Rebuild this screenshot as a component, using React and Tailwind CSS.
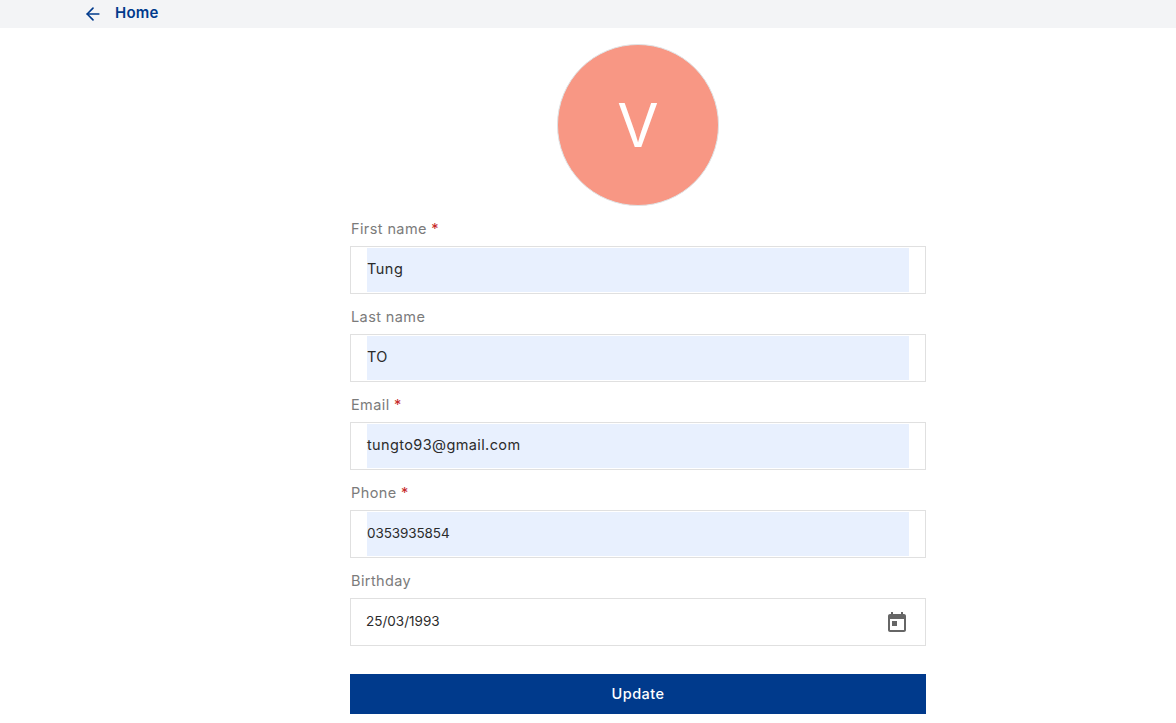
// App.jsx — profile edit form
import { ArrowLeft } from 'lucide-react';

const fields = [
  { label: 'First name', value: 'Tung', required: true, style: 'text-[14.5px] tracking-[0.5px]' },
  { label: 'Last name', value: 'TO', style: 'text-[14.5px] tracking-[0.2px]' },
  { label: 'Email', value: 'tungto93@gmail.com', required: true, style: 'text-[14.5px] tracking-[0.38px]' },
  { label: 'Phone', value: '0353935854', required: true, style: 'text-[13.5px] tracking-[-0.1px]' },
];

function Field({ label, required, children }) {
  return (
    <div className="mt-[11px]">
      <div className="h-6 mb-[5px] pl-px text-[14.5px] leading-6 tracking-[0.4px] text-[#7b7b7b]">
        {label}
        {required && <span className="text-[#c62828]"> *</span>}
      </div>
      {children}
    </div>
  );
}

function CalendarIcon() {
  return (
    <svg width="24" height="24" viewBox="0 0 24 24" fill="#666666">
      <path d="M9 11H7v2h2v-2zM19 4h-1V2h-2v2H8V2H6v2H5c-1.100 0-2 .9-2 2v14c0 1.100.9 2 2 2h14c1.100 0 2-.9 2-2V6c0-1.100-.9-2-2-2zm0 16H5V9h14v11z" />
      <path d="M7 11h5v5H7z" />
    </svg>
  );
}

export default function App() {
  return (
    <div className="min-h-[723px] bg-white font-['Inter','Open_Sans',sans-serif]">
      <div className="h-7 bg-[#f3f4f6] flex items-center pl-[83px]">
        <ArrowLeft size={20} strokeWidth={2} className="text-[#003a8c]" />
        <span className="ml-[12px] pb-px text-[15px] font-semibold tracking-[0.2px] text-[#003a8c]">Home</span>
      </div>

      <div className="w-[576px] ml-[350px] pt-4">
        <div className="mx-auto w-[162px] h-[162px] rounded-full bg-[#f89784] border border-[#dfe3e5] flex items-center justify-center text-white text-[60px] font-normal leading-none">
          V
        </div>

        {fields.map(f => (
          <Field key={f.label} label={f.label} required={f.required}>
            <div className="h-12 border border-[#e0e0e0] px-4 py-px">
              <div className={`h-full pb-0.5 bg-[#e8f0fe] flex items-center text-[#2b2b2b] ${f.style}`}>
                {f.value}
              </div>
            </div>
          </Field>
        ))}

        <Field label="Birthday">
          <div className="h-12 border border-[#e0e0e0] pl-[15px] pr-[16px] flex items-center justify-between text-[13.5px] text-[#2b2b2b]">
            <span className="pb-0.5">25/03/1993</span>
            <CalendarIcon />
          </div>
        </Field>

        <button className="mt-7 w-full h-10 bg-[#003a8c] text-white text-[14.5px] font-medium tracking-[0.45px]">
          Update
        </button>
      </div>
    </div>
  );
}
